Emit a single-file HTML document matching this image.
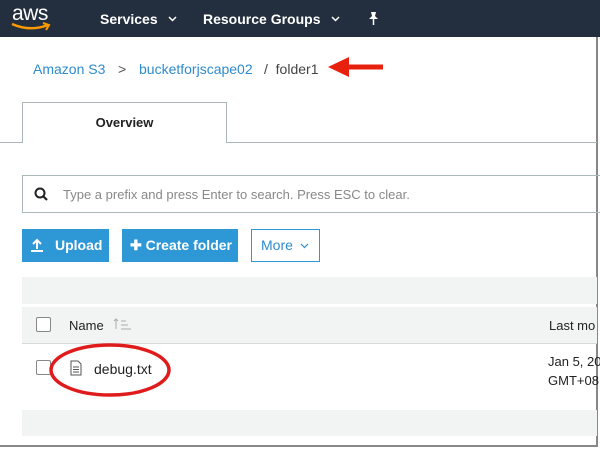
<!DOCTYPE html>
<html><head><style>
*{margin:0;padding:0;box-sizing:border-box}
body{width:600px;height:451px;background:#fff;font-family:"Liberation Sans",sans-serif;position:relative;overflow:hidden}
.abs{position:absolute}
</style></head><body>
<div class="abs" style="left:0;top:0;width:600px;height:37px;background:#232f3e"></div>
<div class="abs" style="left:12px;top:2px;color:#fff;font-size:21px;letter-spacing:-0.5px">aws</div>
<svg class="abs" style="left:10px;top:22px" width="42" height="10"><path d="M2 2 Q20 10 38 3" stroke="#f90" stroke-width="2.5" fill="none"/><path d="M33 1 L39 3 L36 8" stroke="#f90" stroke-width="2" fill="none"/></svg>
<div class="abs" style="left:100px;top:11px;color:#fff;font-weight:bold;font-size:14px">Services</div>
<svg class="abs" style="left:168px;top:16px" width="9" height="6"><path d="M1 1 L4.5 4.5 L8 1" stroke="#fff" stroke-width="1.5" fill="none"/></svg>
<div class="abs" style="left:203px;top:11px;color:#fff;font-weight:bold;font-size:14px">Resource Groups</div>
<svg class="abs" style="left:331px;top:16px" width="9" height="6"><path d="M1 1 L4.5 4.5 L8 1" stroke="#fff" stroke-width="1.5" fill="none"/></svg>
<svg class="abs" style="left:367px;top:11px" width="13" height="15"><path d="M4 1 H9 L8 5 L11 8 H2 L5 5 Z" fill="#fff"/><path d="M6.5 8 V14" stroke="#fff" stroke-width="1.5"/></svg>
<div class="abs" style="left:0;top:37px;width:598px;height:410px;border-right:2px solid #888;border-bottom:2px solid #888;background:#fff"></div>
<div class="abs" style="left:33px;top:61px;font-size:14px;color:#2e8bcc">Amazon S3</div>
<div class="abs" style="left:118px;top:61px;font-size:14px;color:#555">&gt;</div>
<div class="abs" style="left:139px;top:61px;font-size:14px;color:#2e8bcc">bucketforjscape02</div>
<div class="abs" style="left:264px;top:61px;font-size:14px;color:#444">/&nbsp; folder1</div>
<svg class="abs" style="left:325px;top:54px" width="62" height="28"><path d="M58 13 L18 13" stroke="#e8210f" stroke-width="5"/><path d="M3 13 L24 3 L24 23 Z" fill="#e8210f"/></svg>
<div class="abs" style="left:0;top:142px;width:597px;height:1px;background:#aab7b8"></div>
<div class="abs" style="left:22px;top:102px;width:205px;height:41px;border:1px solid #aab7b8;border-bottom:none;background:#fff;text-align:center;line-height:40px;font-weight:bold;font-size:13px;color:#222">Overview</div>
<div class="abs" style="left:22px;top:175px;width:580px;height:38px;border:1px solid #aab7b8;border-right:none"></div>
<svg class="abs" style="left:34px;top:187px" width="14" height="14"><circle cx="6" cy="6" r="4.5" stroke="#222" stroke-width="2" fill="none"/><path d="M9 9 L13 13" stroke="#222" stroke-width="2.2"/></svg>
<div class="abs" style="left:63px;top:187px;font-size:13px;color:#888">Type a prefix and press Enter to search. Press ESC to clear.</div>
<div class="abs" style="left:22px;top:229px;width:87px;height:33px;background:#2e97d6;color:#fff;font-weight:bold;font-size:14px;line-height:33px;padding-left:33px">Upload</div>
<svg class="abs" style="left:30px;top:238px" width="15" height="14"><path d="M7 11 V2 M3 6 L7 2 L11 6" stroke="#fff" stroke-width="2" fill="none"/><path d="M1 13 H13" stroke="#fff" stroke-width="2"/></svg>
<div class="abs" style="left:122px;top:229px;width:116px;height:33px;background:#2e97d6;color:#fff;font-weight:bold;font-size:14px;line-height:33px;padding-left:8px">&#10010; Create folder</div>
<div class="abs" style="left:251px;top:229px;width:69px;height:33px;border:1px solid #2e97d6;color:#2e8bcc;font-size:14px;line-height:31px;padding-left:9px">More</div>
<svg class="abs" style="left:300px;top:243px" width="9" height="6"><path d="M1 1 L4.5 4.5 L8 1" stroke="#2e8bcc" stroke-width="1.2" fill="none"/></svg>
<div class="abs" style="left:22px;top:277px;width:575px;height:27px;background:#f2f4f4"></div>
<div class="abs" style="left:22px;top:307px;width:575px;height:37px;background:#f2f4f4;border-bottom:1px solid #d5dbdb"></div>
<div class="abs" style="left:36px;top:317px;width:15px;height:15px;border:1px solid #888;background:#fff;border-radius:2px"></div>
<div class="abs" style="left:69px;top:318px;font-size:13px;color:#222">Name</div>
<svg class="abs" style="left:113px;top:318px" width="20" height="12"><path d="M3 11 V1 M1 3 L3 1 L5 3" stroke="#aaa" fill="none"/><path d="M8 3 H13 M8 7 H15 M8 11 H18" stroke="#aaa"/></svg>
<div class="abs" style="left:549px;top:318px;font-size:13px;color:#222">Last mo</div>
<div class="abs" style="left:36px;top:360px;width:15px;height:15px;border:1px solid #888;background:#fff;border-radius:2px"></div>
<svg class="abs" style="left:48px;top:340px" width="130" height="60"><ellipse cx="62" cy="30" rx="59" ry="25" stroke="#e01b1b" stroke-width="3.5" fill="none"/></svg>
<svg class="abs" style="left:70px;top:360px" width="12" height="16"><path d="M1 1 H8 L11 4 V15 H1 Z" stroke="#555" fill="none"/><path d="M3 7 H9 M3 9.5 H9 M3 12 H9" stroke="#555"/></svg>
<div class="abs" style="left:94px;top:361px;font-size:14px;color:#222">debug.txt</div>
<div class="abs" style="left:548px;top:352px;font-size:13px;color:#222;line-height:19px;white-space:nowrap">Jan 5, 20<br>GMT+08</div>
<div class="abs" style="left:22px;top:410px;width:575px;height:26px;background:#f2f4f4"></div>
</body></html>
